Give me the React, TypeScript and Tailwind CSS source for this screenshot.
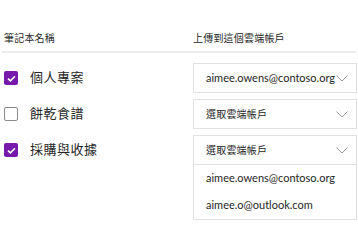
import React from "react";

const FONT = "font-['Lato','Noto_Sans_CJK_TC',sans-serif]";

type Row = { name: string; checked: boolean; account: string | null; open?: boolean };

const rows: Row[] = [
  { name: "個人專案", checked: true, account: "aimee.owens@contoso.org" },
  { name: "餅乾食譜", checked: false, account: null },
  { name: "採購與收據", checked: true, account: null, open: true },
];

const accounts = ["aimee.owens@contoso.org", "aimee.o@outlook.com"];

function Chevron() {
  return (
    <svg width="12" height="7" viewBox="0 0 12 7" fill="none" className="shrink-0">
      <path d="M0.5 0.5L6 6L11.5 0.5" stroke="#9a9a9a" strokeWidth="1" />
    </svg>
  );
}

function Checkbox({ checked }: { checked: boolean }) {
  if (checked) {
    return (
      <div className="w-[14px] h-[14px] rounded-[2px] bg-[#7719aa] flex items-center justify-center shrink-0">
        <svg width="9" height="7" viewBox="0 0 9 7" fill="none">
          <path d="M1 3.6L3.4 5.8L8 1.2" stroke="white" strokeWidth="1.6" />
        </svg>
      </div>
    );
  }
  return <div className="w-[14px] h-[14px] rounded-[2px] border border-[#8a8a8a] bg-white shrink-0" />;
}

export default function App() {
  return (
    <div className={`w-[358px] h-[250px] bg-white text-[#262626] overflow-hidden ${FONT}`}>
      {/* Header */}
      <div className="flex pt-[30px] pb-[5px] text-[10px] leading-[16px] tracking-[0.2px]">
        <div className="w-[193px] pl-[4px]">筆記本名稱</div>
        <div className="flex-1">上傳到這個雲端帳戶</div>
      </div>
      <div className="mx-[2px] h-[2px] bg-[#ececec]" />

      {/* Rows */}
      <div className="flex flex-col gap-[6px] pt-[10px]">
        {rows.map((r) => (
          <div key={r.name} className="flex items-start">
            <div className="w-[193px] h-[30px] pl-[4px] flex items-center gap-[12px]">
              <Checkbox checked={r.checked} />
              <span className="text-[13px] tracking-[0.5px]">{r.name}</span>
            </div>
            <div className="w-[164px] border border-[#e1e1e1] bg-white">
              <div className="h-[28px] pl-[12px] pr-[8px] flex items-center justify-between text-[11px]">
                <span className={r.account ? "" : "text-[10px] tracking-[0.2px]"}>{r.account ?? "選取雲端帳戶"}</span>
                <Chevron />
              </div>
              {r.open && (
                <div className="border-t border-[#e1e1e1]">
                  {accounts.map((a) => (
                    <div key={a} className="h-[27px] pl-[12px] flex items-center text-[11px]">
                      {a}
                    </div>
                  ))}
                </div>
              )}
            </div>
          </div>
        ))}
      </div>
    </div>
  );
}
